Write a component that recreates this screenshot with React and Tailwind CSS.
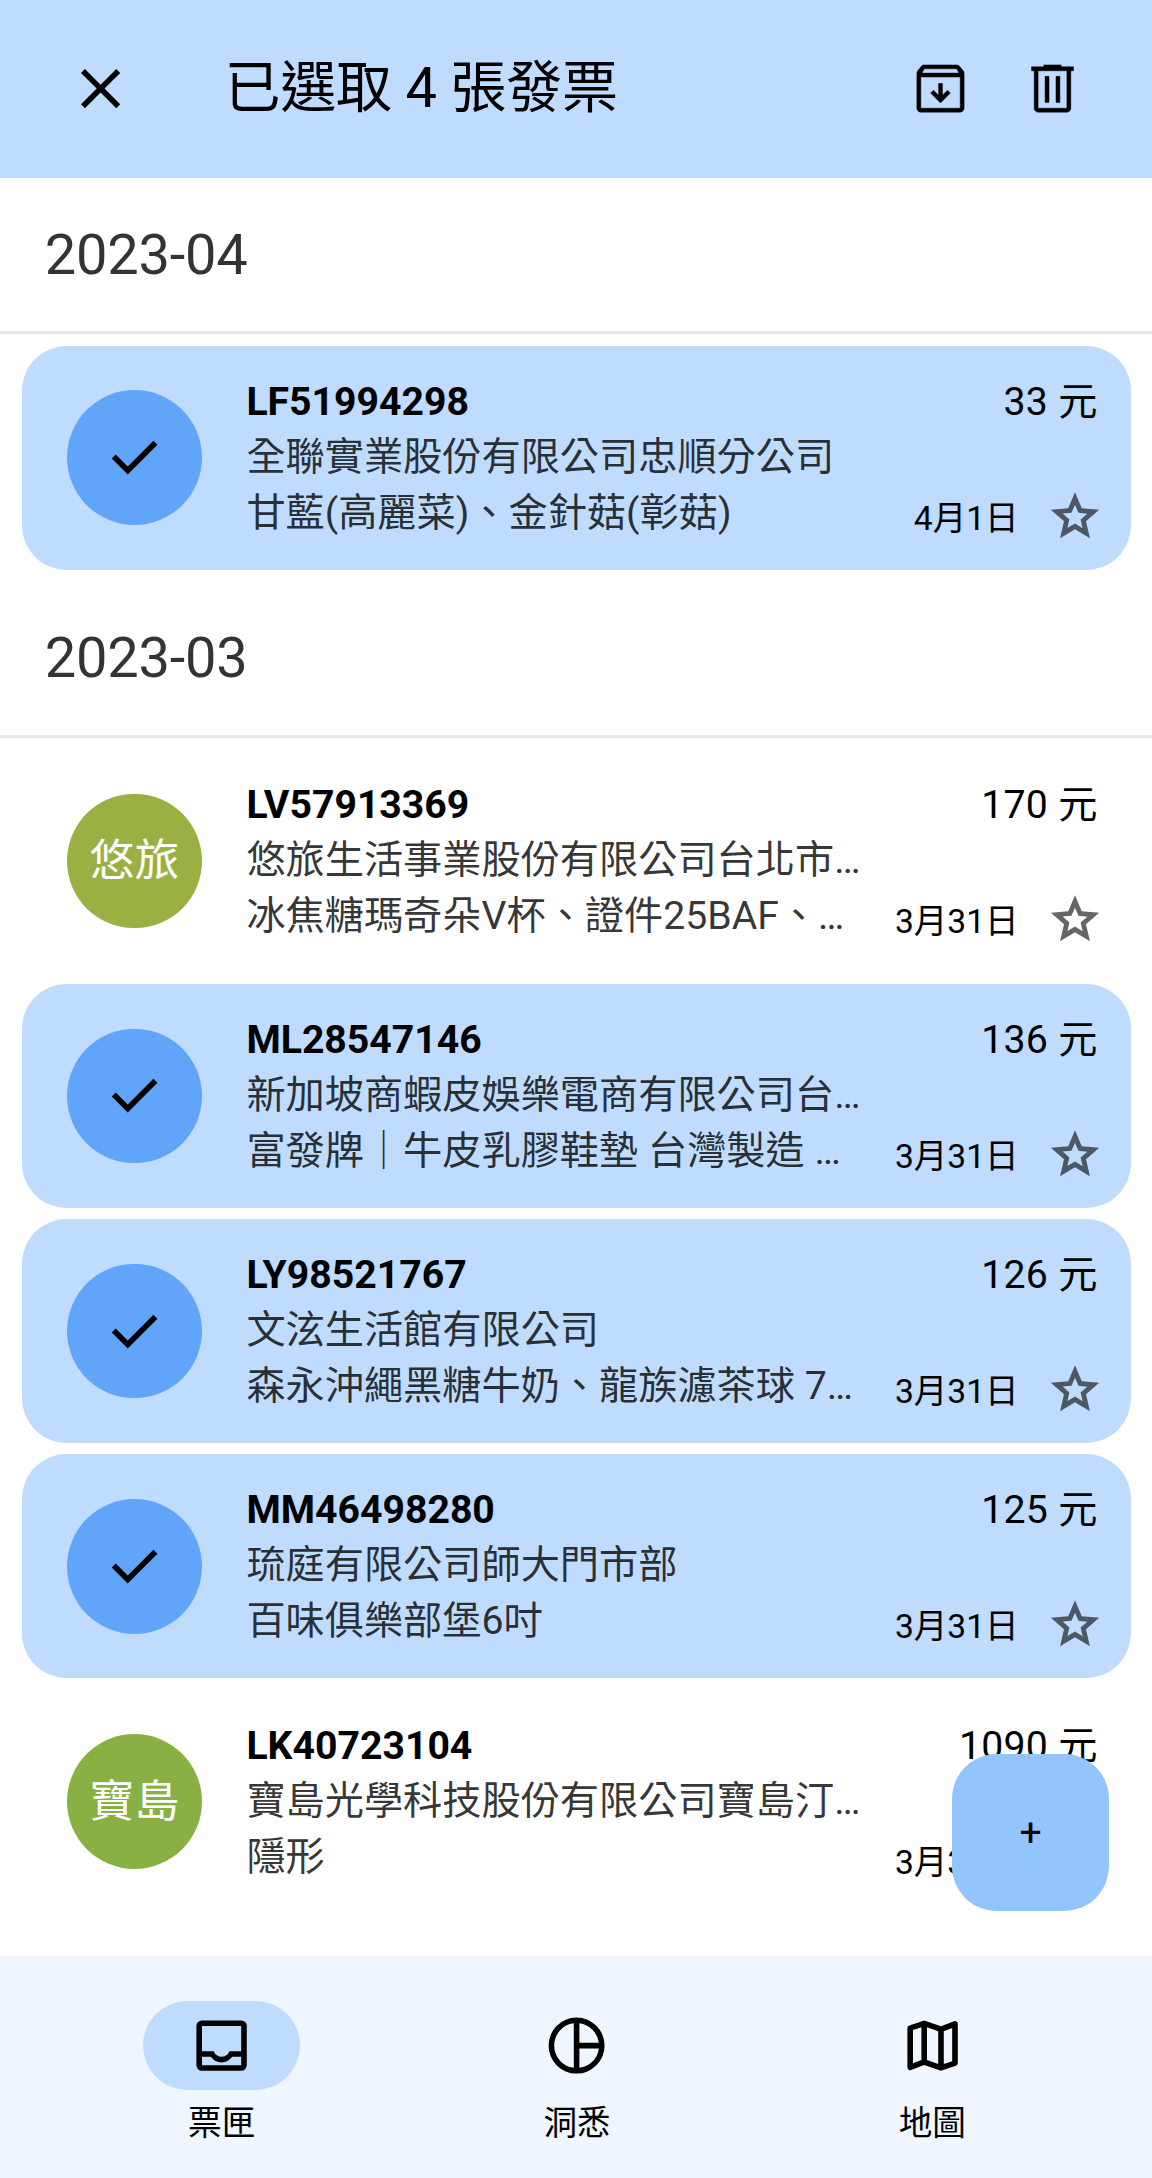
import React from "react";

const paths = {
  close:
    "M256 760 200 704 424 480 200 256 256 200 480 424 704 200 760 256 536 480 760 704 704 760 480 536Z",
  check: "M382 720 154 492l57-57 171 171 367-367 57 57-424 424Z",
  archive:
    "m480 700 150-150-43-43-77 77V404h-60v180l-77-77-43 43 150 150ZM180 305v475h600V305H180Zm0 535q-24 0-42-18t-18-42V252q0-14 4-25t12-20l56-69q8-9 18-13.500t22-4.500h495q12 0 22 4.500t18 13.500l57 69q8 9 12 20t4 25v528q0 24-18 42t-42 18H180Zm17-595h565l-36-65H233l-36 65Z",
  trash:
    "M261 840q-24.750 0-42.375-17.625T201 780V210h-41v-60h188v-30h264v30h188v60h-41v570q0 24-18 42t-42 18H261Zm438-630H261v570h438V210ZM367 694h60V295h-60v399Zm166 0h60V295h-60v399Z",
  star:
    "m354 713 126-76 126 77-33-144 111-96-146-13-58-136-58 135-146 13 111 97-33 143ZM233 880l65-281L80 410l288-25 112-265 112 265 288 25-218 189 65 281-247-149-247 149Z",
  inbox:
    "M200 840q-33 0-56.500-23.500T120 760V200q0-33 23.500-56.500T200 120h560q33 0 56.500 23.500T840 200v560q0 33-23.500 56.500T760 840H200Zm0-80h560V640H632q-30 38-67 59t-85 21q-48 0-87.500-21T328 640H200v120Zm280-120q38 0 69-22t43-58h168V200H200v360h168q12 36 43 58t69 22Z",
  pie:
    "M520 440h278q-15-110-91.500-186.500T520 162v278Zm-80 358V162q-121 15-200.500 105.500T160 480q0 122 79.500 212.500T440 798Zm80 0q110-14 187-91t91-187H520v278ZM480 880q-83 0-156-31.500t-127-85.500-85.500-127T80 480t31.500-156 85.500-127 127-85.500T480 80q83 0 155.500 31.500t127 86 86 127T880 480q0 82-31.500 155t-86 127.500-127 86T480 880Z",
  map:
    "m600 840-240-84-186 72q-20 8-37-4.500T120 790V230q0-13 7.500-23t20.500-15l212-72 240 84 186-72q20-8 37 4.500t17 33.500v560q0 13-7.500 23T812 768l-212 72Zm-40-98V274l-160-56v468l160 56Zm80 0 120-40V228l-120 46v468ZM200 732l120-46V218l-120 40v474Z",
};

function Icon({ name, className }) {
  return (
    <svg viewBox="0 0 960 960" fill="currentColor" className={"shrink-0 " + className}>
      <path d={paths[name]} />
    </svg>
  );
}

const sections = [
  {
    month: "2023-04",
    items: [
      { id: "LF51994298", shop: "全聯實業股份有限公司忠順分公司", detail: "甘藍(高麗菜)、金針菇(彰菇)", price: "33 元", date: "4月1日", selected: true },
    ],
  },
  {
    month: "2023-03",
    items: [
      { id: "LV57913369", shop: "悠旅生活事業股份有限公司台北市…", detail: "冰焦糖瑪奇朵V杯、證件25BAF、…", price: "170 元", date: "3月31日", label: "悠旅", color: "bg-[#9ab042]" },
      { id: "ML28547146", shop: "新加坡商蝦皮娛樂電商有限公司台…", detail: "富發牌｜牛皮乳膠鞋墊 台灣製造 …", price: "136 元", date: "3月31日", selected: true },
      { id: "LY98521767", shop: "文泫生活館有限公司", detail: "森永沖繩黑糖牛奶、龍族濾茶球 7…", price: "126 元", date: "3月31日", selected: true },
      { id: "MM46498280", shop: "琉庭有限公司師大門市部", detail: "百味俱樂部堡6吋", price: "125 元", date: "3月31日", selected: true },
      { id: "LK40723104", shop: "寶島光學科技股份有限公司寶島汀…", detail: "隱形", price: "1090 元", date: "3月31日", label: "寶島", color: "bg-[#89b042]" },
    ],
  },
];

function Invoice({ item }) {
  return (
    <li
      className={
        "ml-[22.4px] mr-[21.3px] mb-[11.2px] flex h-[224px] items-center rounded-[44.8px] pl-[44.8px] pr-[33px] " +
        (item.selected ? "bg-[#bfdbfe]" : "")
      }
    >
      <div
        className={
          "flex size-[134.4px] shrink-0 items-center justify-center rounded-full text-[44.8px] " +
          (item.selected ? "bg-[#60a5fa] text-black" : "text-white " + item.color)
        }
      >
        {item.selected ? <Icon name="check" className="size-[67.2px]" /> : item.label}
      </div>
      <div className="ml-[44.8px] flex h-[168px] min-w-0 flex-1 flex-col whitespace-nowrap leading-[56px]">
        <div className="flex h-[55px] justify-between">
          <span className="font-bold">{item.id}</span>
          <span className="tracking-[0.3px]">{item.price}</span>
        </div>
        <div className="text-black/80">{item.shop}</div>
        <div className="flex h-[56px] items-center justify-between">
          <span className="text-black/80">{item.detail}</span>
          <div className="-mr-[6px] flex items-center gap-[27px] pt-[2px]">
            <span className="relative top-[5px] text-[33.6px]">{item.date}</span>
            <Icon name="star" className="size-[58px] text-black/60" />
          </div>
        </div>
      </div>
    </li>
  );
}

const tabs = [
  { icon: "inbox", label: "票匣", active: true },
  { icon: "pie", label: "洞悉" },
  { icon: "map", label: "地圖" },
];

export default function App() {
  return (
    <div
      lang="zh-Hant"
      className="relative flex h-[2178px] w-[1152px] flex-col overflow-hidden bg-white font-['Roboto','Noto_Sans_CJK_TC',sans-serif] text-[39.2px] text-black"
    >
      <header className="flex h-[177.6px] shrink-0 items-center bg-[#bfdbfe] pl-[67.2px] pr-[68px] pb-px">
        <Icon name="close" className="size-[67.2px]" />
        <h1 className="ml-[90px] flex-1 text-[56px] leading-[67px] tracking-[-0.2px]">已選取 4 張發票</h1>
        <Icon name="archive" className="mr-[49px] size-[63px] stroke-black stroke-[7px]" />
        <Icon name="trash" className="size-[63px] stroke-black stroke-[7px]" />
      </header>

      <main className="min-h-0 flex-1 overflow-hidden">
        {sections.map((s) => (
          <section key={s.month}>
            <h2 className="mb-[11.2px] flex h-[156.8px] items-center border-b-[3px] border-[#e5e7eb] pl-[44.8px] pt-px text-[56px] tracking-[-0.25px] text-black/80">
              {s.month}
            </h2>
            <ul>
              {s.items.map((item) => (
                <Invoice key={item.id} item={item} />
              ))}
            </ul>
          </section>
        ))}
      </main>

      <button className="absolute bottom-[267px] right-[43px] flex size-[157px] items-center justify-center rounded-[44.8px] bg-[#93c5fd] pt-[2px]">
        +
      </button>

      <nav className="grid h-[222px] shrink-0 grid-cols-3 bg-[#eff6ff] pl-[44px] pr-[42px] pt-[44.8px]">
        {tabs.map((t) => (
          <div key={t.label} className="flex flex-col items-center">
            <div
              className={
                "flex h-[89.6px] w-[156.8px] items-center justify-center rounded-full " +
                (t.active ? "bg-[#bfdbfe]" : "")
              }
            >
              <Icon name={t.icon} className="size-[67.2px]" />
            </div>
            <span className="mt-[12px] text-[33.6px] leading-[44.8px]">{t.label}</span>
          </div>
        ))}
      </nav>
    </div>
  );
}
